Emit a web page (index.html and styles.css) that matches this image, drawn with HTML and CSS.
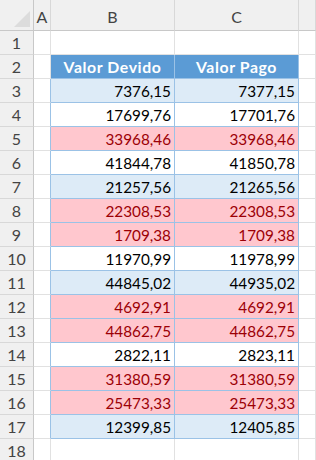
FILE: index.html
```html
<!DOCTYPE html>
<html lang="pt">
<head>
<meta charset="utf-8">
<title>Planilha</title>
<link rel="stylesheet" href="styles.css">
</head>
<body>
<div class="sheet">
  <div class="corner"><span class="tri"></span></div>
  <div class="colhead">A</div>
  <div class="colhead">B</div>
  <div class="colhead">C</div>
  <div class="colhead"></div>

  <div class="rowhead">1</div><div class="cell"></div><div class="cell"></div><div class="cell"></div><div class="cell"></div>

  <div class="rowhead">2</div><div class="cell"></div><div class="th">Valor Devido</div><div class="th">Valor Pago</div><div class="cell"></div>

  <div class="rowhead">3</div><div class="cell edge"></div><div class="td band">7376,15</div><div class="td band">7377,15</div><div class="cell"></div>
  <div class="rowhead">4</div><div class="cell edge"></div><div class="td">17699,76</div><div class="td">17701,76</div><div class="cell"></div>
  <div class="rowhead">5</div><div class="cell edge"></div><div class="td bad">33968,46</div><div class="td bad">33968,46</div><div class="cell"></div>
  <div class="rowhead">6</div><div class="cell edge"></div><div class="td">41844,78</div><div class="td">41850,78</div><div class="cell"></div>
  <div class="rowhead">7</div><div class="cell edge"></div><div class="td band">21257,56</div><div class="td band">21265,56</div><div class="cell"></div>
  <div class="rowhead">8</div><div class="cell edge"></div><div class="td bad">22308,53</div><div class="td bad">22308,53</div><div class="cell"></div>
  <div class="rowhead">9</div><div class="cell edge"></div><div class="td bad">1709,38</div><div class="td bad">1709,38</div><div class="cell"></div>
  <div class="rowhead">10</div><div class="cell edge"></div><div class="td">11970,99</div><div class="td">11978,99</div><div class="cell"></div>
  <div class="rowhead">11</div><div class="cell edge"></div><div class="td band">44845,02</div><div class="td band">44935,02</div><div class="cell"></div>
  <div class="rowhead">12</div><div class="cell edge"></div><div class="td bad">4692,91</div><div class="td bad">4692,91</div><div class="cell"></div>
  <div class="rowhead">13</div><div class="cell edge"></div><div class="td bad">44862,75</div><div class="td bad">44862,75</div><div class="cell"></div>
  <div class="rowhead">14</div><div class="cell edge"></div><div class="td">2822,11</div><div class="td">2823,11</div><div class="cell"></div>
  <div class="rowhead">15</div><div class="cell edge"></div><div class="td bad">31380,59</div><div class="td bad">31380,59</div><div class="cell"></div>
  <div class="rowhead">16</div><div class="cell edge"></div><div class="td bad">25473,33</div><div class="td bad">25473,33</div><div class="cell"></div>
  <div class="rowhead">17</div><div class="cell edge"></div><div class="td band">12399,85</div><div class="td band">12405,85</div><div class="cell"></div>

  <div class="rowhead">18</div><div class="cell"></div><div class="cell"></div><div class="cell"></div><div class="cell"></div>
</div>
</body>
</html>
```

FILE: styles.css
```css
html, body {
  margin: 0;
  padding: 0;
  background: #ffffff;
  overflow: hidden;
}

.sheet {
  display: grid;
  grid-template-columns: 34px 17px 124px 124px 1fr;
  grid-template-rows: 31px repeat(18, 24px);
  width: 316px;
  height: 460px;
  overflow: hidden;
  font-family: "Lato", "Open Sans", sans-serif;
  font-size: 15.3px;
  color: #000;
}

.sheet > div {
  box-sizing: border-box;
  display: flex;
  align-items: center;
  border-right: 1px solid #e1e1e1;
  border-bottom: 1px solid #e1e1e1;
  white-space: nowrap;
  overflow: hidden;
}

.corner {
  background: #f0f0f0;
  justify-content: flex-end;
  align-items: flex-end !important;
  padding: 0 3px 3px 0;
  border-right-color: #c8c8c8 !important;
  border-bottom-color: #c8c8c8 !important;
}

.tri {
  display: block;
  width: 0;
  height: 0;
  border-left: 16px solid transparent;
  border-bottom: 16px solid #dcdcdc;
}

.colhead {
  background: #f0f0f0;
  color: #444444;
  font-size: 16px;
  justify-content: center;
  align-items: flex-end !important;
  padding-bottom: 4px;
  border-right-color: #d8d8d8 !important;
  border-bottom-color: #c8c8c8 !important;
}

.rowhead {
  background: #f0f0f0;
  color: #444444;
  font-size: 16px;
  justify-content: center;
  border-right-color: #c8c8c8 !important;
  border-bottom-color: #d8d8d8 !important;
}

.cell.edge {
  border-right-color: #9bc2e6;
}

.th {
  background: #5b9bd5;
  color: #ffffff;
  font-weight: 700;
  font-size: 15.8px;
  justify-content: center;
  letter-spacing: 0.6px;
  border-right-color: #9bc2e6 !important;
  border-bottom-color: #9bc2e6 !important;
}

.td {
  justify-content: flex-end;
  padding-right: 3px;
  background: #ffffff;
  border-right-color: #9bc2e6 !important;
  border-bottom-color: #9bc2e6 !important;
}

.td.band {
  background: #ddebf7;
}

.td.bad {
  background: #ffc7ce;
  color: #9c0006;
}
```
